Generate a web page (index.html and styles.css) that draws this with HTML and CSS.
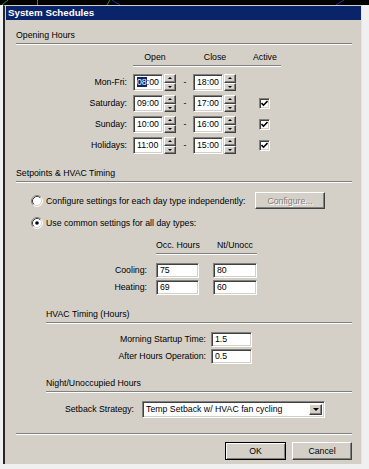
FILE: index.html
```html
<!DOCTYPE html>
<html lang="en">
<head>
    <meta charset="UTF-8">
    <meta name="viewport" content="width=device-width, initial-scale=1.0">
    <title>System Schedules</title>
    <link rel="stylesheet" href="styles.css">
</head>
<body>
    <div class="desktop">
        <svg width="369" height="5" viewBox="0 0 369 5">
            <line x1="2" y1="5" x2="8" y2="0" stroke="#1a9a2a" stroke-width="1"/>
            <line x1="37.5" y1="0" x2="37.5" y2="5" stroke="#1a9a2a" stroke-width="1"/>
            <line x1="107" y1="5" x2="110" y2="0" stroke="#1a9a2a" stroke-width="1"/>
            <path d="M112 0 Q116 3 120 5" stroke="#2233aa" stroke-width="1" fill="none"/>
            <line x1="336" y1="5" x2="344" y2="0" stroke="#2233aa" stroke-width="1"/>
        </svg>
    </div>

    <div class="window">
        <div class="titlebar">System Schedules</div>
        <div class="dialog">
            <div class="group-head">Opening Hours</div>

            <div class="hours">
                <span></span>
                <span class="col-head">Open</span>
                <span class="col-head"></span>
                <span class="col-head">Close</span>
                <span class="col-head active-head">Active</span>

                <label class="row-label">Mon-Fri:</label>
                <div class="time"><div class="field"><span class="sel">08</span>:00</div><div class="spin"><span class="raised up"></span><span class="raised down"></span></div></div>
                <span class="dash">-</span>
                <div class="time"><div class="field">18:00</div><div class="spin"><span class="raised up"></span><span class="raised down"></span></div></div>
                <span></span>

                <label class="row-label">Saturday:</label>
                <div class="time"><div class="field">09:00</div><div class="spin"><span class="raised up"></span><span class="raised down"></span></div></div>
                <span class="dash">-</span>
                <div class="time"><div class="field">17:00</div><div class="spin"><span class="raised up"></span><span class="raised down"></span></div></div>
                <span class="check-cell"><span class="check"><svg width="7" height="7" viewBox="0 0 7 7"><polyline points="0.5,3 2.5,5.2 6.5,1" fill="none" stroke="#000" stroke-width="1.6"/></svg></span></span>

                <label class="row-label">Sunday:</label>
                <div class="time"><div class="field">10:00</div><div class="spin"><span class="raised up"></span><span class="raised down"></span></div></div>
                <span class="dash">-</span>
                <div class="time"><div class="field">16:00</div><div class="spin"><span class="raised up"></span><span class="raised down"></span></div></div>
                <span class="check-cell"><span class="check"><svg width="7" height="7" viewBox="0 0 7 7"><polyline points="0.5,3 2.5,5.2 6.5,1" fill="none" stroke="#000" stroke-width="1.6"/></svg></span></span>

                <label class="row-label">Holidays:</label>
                <div class="time"><div class="field">11:00</div><div class="spin"><span class="raised up"></span><span class="raised down"></span></div></div>
                <span class="dash">-</span>
                <div class="time"><div class="field">15:00</div><div class="spin"><span class="raised up"></span><span class="raised down"></span></div></div>
                <span class="check-cell"><span class="check"><svg width="7" height="7" viewBox="0 0 7 7"><polyline points="0.5,3 2.5,5.2 6.5,1" fill="none" stroke="#000" stroke-width="1.6"/></svg></span></span>
            </div>

            <div class="group-head setpoints-head">Setpoints &amp; HVAC Timing</div>

            <div class="radio-row first">
                <svg class="radio" width="12" height="12" viewBox="0 0 12 12">
                    <circle cx="6" cy="6" r="5" fill="#fff"/>
                    <path d="M2.11 9.89 A5.5 5.5 0 0 1 9.89 2.11" stroke="#808080" fill="none"/>
                    <path d="M9.89 2.11 A5.5 5.5 0 0 1 2.11 9.89" stroke="#fff" fill="none"/>
                    <path d="M2.82 9.18 A4.5 4.5 0 0 1 9.18 2.82" stroke="#404040" fill="none"/>
                    <path d="M9.18 2.82 A4.5 4.5 0 0 1 2.82 9.18" stroke="#d4d0c8" fill="none"/>
                </svg>
                <span>Configure settings for each day type independently:</span>
                <span class="button raised disabled configure">Configure...</span>
            </div>
            <div class="radio-row">
                <svg class="radio" width="12" height="12" viewBox="0 0 12 12">
                    <circle cx="6" cy="6" r="5" fill="#fff"/>
                    <path d="M2.11 9.89 A5.5 5.5 0 0 1 9.89 2.11" stroke="#808080" fill="none"/>
                    <path d="M9.89 2.11 A5.5 5.5 0 0 1 2.11 9.89" stroke="#fff" fill="none"/>
                    <path d="M2.82 9.18 A4.5 4.5 0 0 1 9.18 2.82" stroke="#404040" fill="none"/>
                    <path d="M9.18 2.82 A4.5 4.5 0 0 1 2.82 9.18" stroke="#d4d0c8" fill="none"/>
                    <circle cx="6" cy="6" r="1.8" fill="#000"/>
                </svg>
                <span>Use common settings for all day types:</span>
            </div>

            <div class="setpoints">
                <span></span>
                <span class="col-head">Occ. Hours</span>
                <span class="col-head"></span>
                <span class="col-head">Nt/Unocc</span>

                <label class="row-label">Cooling:</label>
                <div class="field">75</div>
                <span></span>
                <div class="field">80</div>

                <label class="row-label">Heating:</label>
                <div class="field">69</div>
                <span></span>
                <div class="field">60</div>
            </div>

            <div class="group-head sub">HVAC Timing (Hours)</div>
            <div class="timing">
                <label class="row-label">Morning Startup Time:</label>
                <div class="field">1.5</div>
                <label class="row-label">After Hours Operation:</label>
                <div class="field">0.5</div>
            </div>

            <div class="group-head sub">Night/Unoccupied Hours</div>
            <div class="setback">
                <label class="row-label">Setback Strategy:</label>
                <div class="select">
                    <span class="select-text">Temp Setback w/ HVAC fan cycling</span>
                    <span class="raised select-arrow"></span>
                </div>
            </div>

            <div class="separator"></div>

            <div class="actions">
                <span class="button raised default">OK</span>
                <span class="button raised">Cancel</span>
            </div>
        </div>
    </div>
</body>
</html>
```

FILE: styles.css
```css
* {
    box-sizing: border-box;
}

body {
    margin: 0;
    background-color: #f0f0f0;
    font-family: "Liberation Sans", Arial, sans-serif;
    font-size: 8.75px;
    color: #000;
}

.desktop {
    height: 5px;
    background-color: #000;
}

.desktop svg {
    display: block;
}

.window {
    width: 359px;
    margin-left: 3px;
    padding-left: 1px;
    border-left: 2px solid #262626;
    border-top: 1px solid #d4d0c8;
    border-right: 1px solid #e4e4e4;
    background-color: #d4d0c8;
}

.titlebar {
    height: 14px;
    padding-left: 2px;
    background-color: #0a246a;
    color: #fff;
    font-weight: bold;
    font-size: 9.75px;
    line-height: 14px;
}

.dialog {
    padding: 0 9px 4px 10px;
}

/* group headings with etched rule */
.group-head {
    margin-top: 9px;
    line-height: 12px;
    padding-bottom: 2px;
    border-bottom: 1px solid #808080;
    box-shadow: 0 1px 0 #fff;
}

.setpoints-head {
    margin-top: 13px;
}

.group-head.sub {
    margin-top: 13px;
    margin-left: 30px;
}

.col-head {
    line-height: 12px;
    padding-bottom: 2px;
    border-bottom: 1px solid #808080;
    box-shadow: 0 1px 0 #fff;
    text-align: center;
    white-space: nowrap;
}

.row-label {
    text-align: right;
    white-space: nowrap;
}

/* sunken edit box */
.field {
    background-color: #fff;
    border: 1px solid;
    border-color: #808080 #fff #fff #808080;
    box-shadow: inset 1px 1px 0 #404040, inset -1px -1px 0 #d4d0c8;
    padding-left: 3px;
    white-space: nowrap;
}

.raised {
    background-color: #d4d0c8;
    border: 1px solid;
    border-color: #fff #404040 #404040 #fff;
    box-shadow: inset -1px -1px 0 #808080;
}

/* opening hours */
.hours {
    display: grid;
    grid-template-columns: 117px 44px 16px 44px 44px;
    row-gap: 4px;
    margin-top: 7px;
}

.hours .col-head {
    margin-bottom: 4px;
}

.hours .active-head {
    text-align: left;
    padding-left: 16px;
}

.hours .row-label {
    padding-right: 6px;
    line-height: 17px;
}

.time {
    display: flex;
    height: 17px;
}

.time .field {
    width: 30px;
    height: 17px;
    margin-right: 1px;
    line-height: 15px;
}

.sel {
    background-color: #0a246a;
    color: #fff;
}

.spin {
    width: 12px;
    display: flex;
    flex-direction: column;
}

.spin span {
    flex: 1;
    display: flex;
    align-items: center;
    justify-content: center;
}

.spin .up::after {
    content: "";
    border-left: 2px solid transparent;
    border-right: 2px solid transparent;
    border-bottom: 2px solid #000;
}

.spin .down::after {
    content: "";
    border-left: 2px solid transparent;
    border-right: 2px solid transparent;
    border-top: 2px solid #000;
}

.dash {
    text-align: center;
    line-height: 17px;
}

.check-cell {
    display: flex;
    align-items: center;
}

.check {
    width: 11px;
    height: 11px;
    margin-left: 22px;
    background-color: #fff;
    border: 1px solid;
    border-color: #808080 #fff #fff #808080;
    box-shadow: inset 1px 1px 0 #404040, inset -1px -1px 0 #d4d0c8;
    display: flex;
    align-items: center;
    justify-content: center;
}

.check svg {
    display: block;
}

/* radio options */
.radio-row {
    display: flex;
    align-items: center;
    height: 17px;
    margin-top: 5px;
    padding-left: 15px;
    gap: 3px;
}

.radio-row.first {
    margin-top: 10px;
}

.radio {
    display: block;
    flex-shrink: 0;
}

.button {
    display: flex;
    align-items: center;
    justify-content: center;
    height: 18px;
}

.configure {
    width: 70px;
    height: 17px;
    margin-left: auto;
    margin-right: 27px;
}

.disabled {
    color: #808080;
    text-shadow: 1px 1px 0 #fff;
}

/* setpoints table */
.setpoints {
    display: grid;
    grid-template-columns: 140px 43px 14px 44px;
    grid-auto-rows: auto;
    row-gap: 2px;
    margin-top: 8px;
}

.setpoints .col-head {
    margin-bottom: 7px;
}

.setpoints .row-label {
    padding-right: 9px;
    line-height: 15px;
}

.setpoints .field {
    height: 15px;
    line-height: 13px;
}

/* hvac timing */
.timing {
    display: grid;
    grid-template-columns: 195px 41px;
    row-gap: 2px;
    margin-top: 9px;
}

.timing .row-label {
    padding-right: 5px;
    line-height: 15px;
}

.timing .field {
    height: 15px;
    line-height: 13px;
}

/* setback */
.setback {
    display: grid;
    grid-template-columns: 126px 183px;
    margin-top: 9px;
}

.setback .row-label {
    padding-right: 8px;
    line-height: 17px;
}

.select {
    display: flex;
    height: 17px;
    background-color: #fff;
    border: 1px solid;
    border-color: #808080 #fff #fff #808080;
    box-shadow: inset 1px 1px 0 #404040, inset -1px -1px 0 #d4d0c8;
    padding: 2px;
}

.select-text {
    flex: 1;
    padding-left: 1px;
    line-height: 11px;
}

.select-arrow {
    width: 13px;
    display: flex;
    align-items: center;
    justify-content: center;
}

.select-arrow::after {
    content: "";
    border-left: 3px solid transparent;
    border-right: 3px solid transparent;
    border-top: 3px solid #000;
}

.separator {
    margin-top: 15px;
    border-top: 1px solid #808080;
    border-bottom: 1px solid #fff;
}

.actions {
    display: flex;
    justify-content: flex-end;
    gap: 6px;
    margin-top: 7px;
}

.actions .button {
    width: 60px;
}

.actions .default {
    width: 61px;
    border-color: #000;
    box-shadow: inset 1px 1px 0 #fff, inset -1px -1px 0 #808080;
}
```
